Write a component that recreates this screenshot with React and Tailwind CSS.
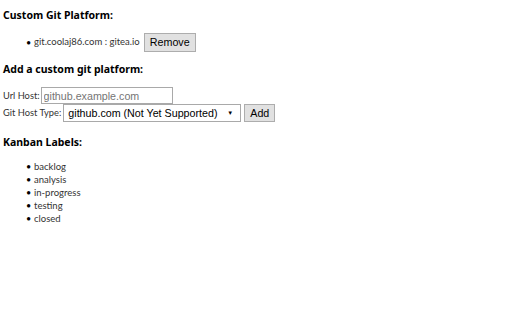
export default function App() {
  const labels = ['backlog', 'analysis', 'in-progress', 'testing', 'closed'];
  const arial = { fontFamily: '"Liberation Sans", Arial, sans-serif' };
  const heading = { fontFamily: '"Noto Sans", sans-serif' };

  return (
    <div className="w-[512px] h-[320px] bg-white pl-[3px] pt-[9px] text-[#333]" style={{ fontFamily: 'Lato, "Noto Sans", sans-serif' }}>
      {/* Custom platforms */}
      <h3 className="text-[10.5px] font-bold leading-[13px] text-black" style={heading}>Custom Git Platform:</h3>
      <ul className="mt-[11px] pl-[23px] text-[9.5px]">
        <li className="flex items-center">
          <span className="w-[8px] text-[9px] leading-none text-black">•</span>
          <span>git.coolaj86.com : gitea.io</span>
          <button className="ml-[4px] h-[19px] w-[52px] bg-[#e1e1e1] border border-[#adadad] text-[10.7px] text-black leading-none" style={arial}>
            Remove
          </button>
        </li>
      </ul>

      {/* Add form */}
      <h3 className="mt-[11px] text-[10.5px] font-bold leading-[13px] text-black" style={heading}>Add a custom git platform:</h3>
      <div className="mt-[11px] text-[9.3px]">
        <div className="flex items-center h-[17px]">
          <span>Url Host:</span>
          <input
            placeholder="github.example.com"
            className="ml-[1px] w-[132px] h-[17px] border border-[#a9a9a9] px-[2px] text-[10.7px] placeholder-[#757575] outline-none"
            style={arial}
          />
        </div>
        <div className="flex items-center h-[18px]">
          <span>Git Host Type:</span>
          <div className="ml-[2px] w-[178px] h-[18px] border border-[#a9a9a9] flex items-center justify-between pl-[4px] pr-[7px] text-[10.7px] text-black whitespace-nowrap" style={arial}>
            <span>github.com (Not Yet Supported)</span>
            <span className="text-[6px]">▼</span>
          </div>
          <button className="ml-[3px] h-[18px] w-[31px] bg-[#e1e1e1] border border-[#adadad] text-[10.7px] text-black leading-none" style={arial}>
            Add
          </button>
        </div>
      </div>

      {/* Kanban */}
      <h3 className="mt-[14px] text-[10.5px] font-bold leading-[13px] text-black" style={heading}>Kanban Labels:</h3>
      <ul className="mt-[11px] pl-[23px] text-[9.5px] leading-[13px]">
        {labels.map((l) => (
          <li key={l} className="flex items-center">
            <span className="w-[8px] text-[9px] text-black">•</span>
            <span>{l}</span>
          </li>
        ))}
      </ul>
    </div>
  );
}
